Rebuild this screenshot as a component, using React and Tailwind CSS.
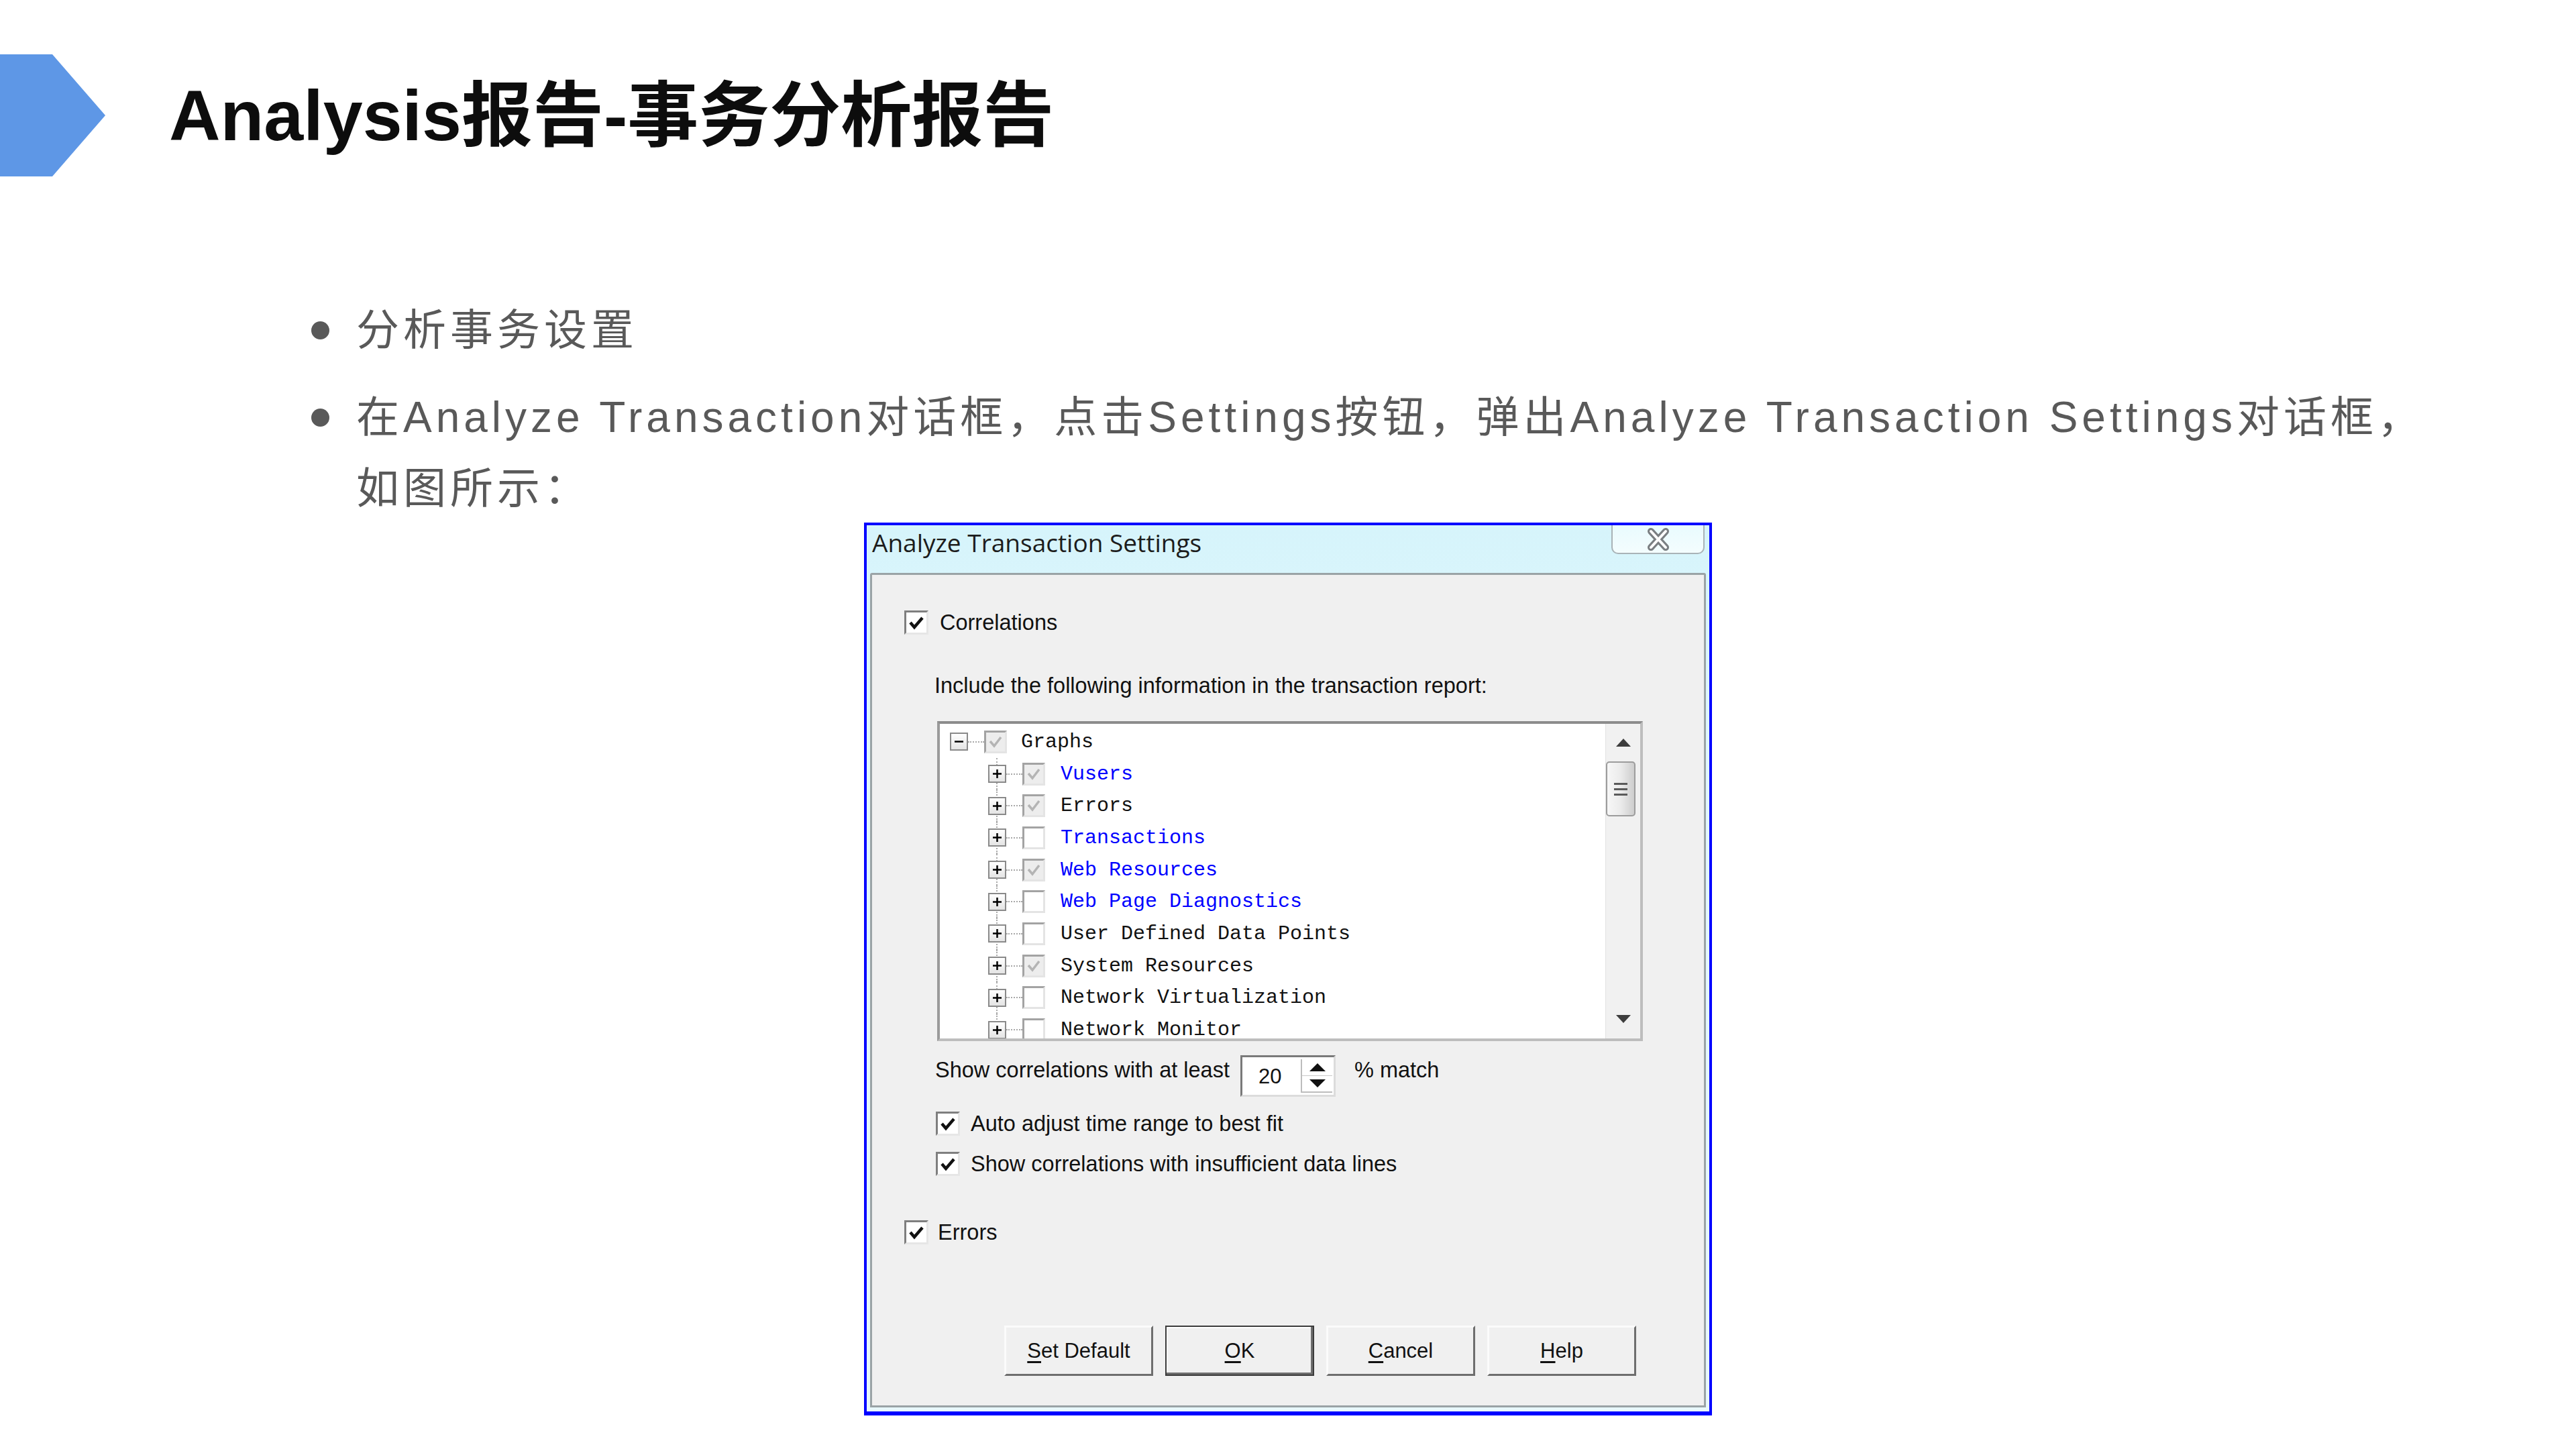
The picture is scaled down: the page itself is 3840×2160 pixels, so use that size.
import React from "react";

const treeRows = [
  { label: "Vusers", blue: true, checked: true },
  { label: "Errors", blue: false, checked: true },
  { label: "Transactions", blue: true, checked: false },
  { label: "Web Resources", blue: true, checked: true },
  { label: "Web Page Diagnostics", blue: true, checked: false },
  { label: "User Defined Data Points", blue: false, checked: false },
  { label: "System Resources", blue: false, checked: true },
  { label: "Network Virtualization", blue: false, checked: false },
  { label: "Network Monitor", blue: false, checked: false },
];

function CheckBox({ checked = true }) {
  return (
    <span className="w-[36px] h-[36px] shrink-0 bg-white border-[3px] border-t-[#7f7f7f] border-l-[#7f7f7f] border-b-[#e6e6e6] border-r-[#e6e6e6] flex items-center justify-center">
      {checked && (
        <svg width="24" height="22" viewBox="0 0 24 22">
          <path d="M3 11 L9 18 L21 4" fill="none" stroke="#111" strokeWidth="4.5" />
        </svg>
      )}
    </span>
  );
}

function TreeCheck({ checked }) {
  return (
    <span
      className={
        "w-[34px] h-[34px] shrink-0 border-[3px] border-t-[#a3a3a3] border-l-[#a3a3a3] border-b-[#e4e4e4] border-r-[#e4e4e4] flex items-center justify-center " +
        (checked ? "bg-[#ededed]" : "bg-white")
      }
    >
      {checked && (
        <svg width="22" height="20" viewBox="0 0 22 20">
          <path d="M3 9 L9 16 L19 3" fill="none" stroke="#b4b4b4" strokeWidth="3.5" />
        </svg>
      )}
    </span>
  );
}

function ExpandBox({ minus }) {
  return (
    <span className="relative z-10 w-[27px] h-[27px] shrink-0 border-2 border-[#8a8a8a] bg-[linear-gradient(180deg,#ffffff,#e4e4e4)] flex items-center justify-center">
      <svg width="15" height="15" viewBox="0 0 15 15">
        <path d={minus ? "M1 7.5 H14" : "M1 7.5 H14 M7.5 1 V14"} stroke="#000" strokeWidth="2.5" />
      </svg>
    </span>
  );
}

function Btn({ first, rest, isDefault }) {
  return (
    <div
      className={
        "w-[222px] h-[75px] flex items-center justify-center bg-[#f0f0f0] text-[31px] text-[#111] " +
        (isDefault
          ? "border-2 border-[#3c3c3c] shadow-[inset_-3px_-3px_0_#6e6e6e,inset_2px_2px_0_#ffffff]"
          : "border-[3px] border-t-[#fbfbfb] border-l-[#fbfbfb] border-b-[#6e6e6e] border-r-[#6e6e6e]")
      }
    >
      <span>
        <span className="underline underline-offset-[5px]">{first}</span>
        {rest}
      </span>
    </div>
  );
}

function Tree() {
  return (
    <div className="mt-[34px] ml-[49px] w-[1052px] h-[477px] shrink-0 bg-white border-[4px] border-t-[#8c8c8c] border-l-[#9a9a9a] border-b-[#bdbdbd] border-r-[#bdbdbd] flex overflow-hidden">
      <div className="flex-1 pt-[3px] overflow-hidden font-['Liberation_Mono',monospace] text-[30px] leading-none">
        <div className="h-[47.7px] flex items-center pl-[15px]">
          <ExpandBox minus />
          <span className="w-[24px] border-t-2 border-dotted border-[#a8a8a8]" />
          <TreeCheck checked />
          <span className="ml-[21px] text-[#111]">Graphs</span>
        </div>
        {treeRows.map((r) => (
          <div key={r.label} className="h-[47.7px] flex items-center pl-[71px]">
            <span className="relative w-[28px] h-full flex items-center justify-center">
              <span className="absolute inset-y-0 left-[13px] border-l-2 border-dotted border-[#a8a8a8]" />
              <ExpandBox />
            </span>
            <span className="w-[24px] border-t-2 border-dotted border-[#a8a8a8]" />
            <TreeCheck checked={r.checked} />
            <span className={"ml-[23px] whitespace-nowrap " + (r.blue ? "text-[#0000ff]" : "text-[#111]")}>
              {r.label}
            </span>
          </div>
        ))}
      </div>
      <div className="w-[52px] h-full shrink-0 bg-[#f1f1f1] border-l border-[#e2e2e2] flex flex-col">
        <div className="h-[56px] flex items-center justify-center">
          <svg width="22" height="12" viewBox="0 0 22 12">
            <path d="M11 0 L22 12 H0 Z" fill="#3d3d3d" />
          </svg>
        </div>
        <div className="w-[44px] h-[82px] rounded-[5px] border-2 border-[#9c9c9c] bg-[linear-gradient(90deg,#f7f7f7,#ebebeb_50%,#cdcdcd)] flex flex-col items-center justify-center gap-[5px]">
          <span className="w-[20px] h-[3px] bg-[#5a5a5a]" />
          <span className="w-[20px] h-[3px] bg-[#5a5a5a]" />
          <span className="w-[20px] h-[3px] bg-[#5a5a5a]" />
        </div>
        <div className="mt-auto h-[58px] flex items-center justify-center">
          <svg width="22" height="12" viewBox="0 0 22 12">
            <path d="M0 0 H22 L11 12 Z" fill="#3d3d3d" />
          </svg>
        </div>
      </div>
    </div>
  );
}

function Dialog() {
  return (
    <div className="mx-auto mt-[-2px] w-[1264px] h-[1331px] border-[4px] border-b-[6px] border-[#0000ff] bg-[linear-gradient(180deg,#d6f4fb_0%,#e2f8fd_30%,#e8f8fb_100%)] flex flex-col">
      <div className="h-[71px] shrink-0 flex items-start justify-between pl-[8px] pr-[7px]">
        <span className="mt-[7px] font-['Open_Sans',sans-serif] text-[37px] leading-none text-[#1c1c1c]">
          Analyze Transaction Settings
        </span>
        <div className="w-[139px] h-[43px] border-2 border-t-0 border-[#a9b3b7] rounded-b-[10px] bg-[linear-gradient(180deg,#e9fbfe,#f4fdfe)] flex items-center justify-center">
          <svg width="40" height="34" viewBox="0 0 40 34">
            <path d="M9 5 L31 29 M31 5 L9 29" stroke="#7a7f82" strokeWidth="10" strokeLinecap="round" />
            <path d="M9 5 L31 29 M31 5 L9 29" stroke="#ffffff" strokeWidth="4" strokeLinecap="round" />
          </svg>
        </div>
      </div>
      <div className="flex-1 mx-[5px] mb-[6px] border-[3px] border-[#9aa3a6] rounded-t-[3px] bg-[#f0f0f0] pl-[48px] flex flex-col font-['Liberation_Sans',sans-serif] text-[32.5px] leading-none text-[#111]">
        <div className="mt-[52px] h-[38px] flex items-center gap-[17px]">
          <CheckBox />
          <span>Correlations</span>
        </div>
        <div className="mt-[56px] h-[38px] ml-[45px] flex items-center">
          Include the following information in the transaction report:
        </div>
        <Tree />
        <div className="mt-[21px] ml-[46px] h-[62px] flex items-center">
          <span className="w-[455px] shrink-0 mb-[18px] whitespace-nowrap">Show correlations with at least</span>
          <div className="w-[142px] h-[62px] shrink-0 bg-white border-[3px] border-t-[#7a7a7a] border-l-[#7a7a7a] border-b-[#dcdcdc] border-r-[#dcdcdc] flex items-center">
            <span className="ml-[24px] text-[31px]">20</span>
            <div className="ml-auto mr-[2px] w-[47px] h-[50px] border-l-2 border-b-2 border-[#bdbdbd] flex flex-col">
              <div className="flex-1 flex items-center justify-center border-b border-[#c8c8c8]">
                <svg width="24" height="12" viewBox="0 0 24 12">
                  <path d="M12 0 L24 12 H0 Z" fill="#111" />
                </svg>
              </div>
              <div className="flex-1 flex items-center justify-center">
                <svg width="24" height="12" viewBox="0 0 24 12">
                  <path d="M0 0 H24 L12 12 Z" fill="#111" />
                </svg>
              </div>
            </div>
          </div>
          <span className="ml-[28px] mb-[18px] whitespace-nowrap">% match</span>
        </div>
        <div className="mt-[22px] ml-[47px] h-[36px] flex items-center gap-[16px]">
          <CheckBox />
          <span>Auto adjust time range to best fit</span>
        </div>
        <div className="mt-[24px] ml-[47px] h-[36px] flex items-center gap-[16px]">
          <CheckBox />
          <span>Show correlations with insufficient data lines</span>
        </div>
        <div className="mt-[65px] h-[38px] flex items-center gap-[14px]">
          <CheckBox />
          <span>Errors</span>
        </div>
        <div className="mt-[120px] ml-[149px] flex gap-[18px]">
          <Btn first="S" rest="et Default" />
          <Btn first="O" rest="K" isDefault />
          <Btn first="C" rest="ancel" />
          <Btn first="H" rest="elp" />
        </div>
      </div>
    </div>
  );
}

export default function App() {
  return (
    <div className="w-[3840px] h-[2160px] bg-white overflow-hidden font-['Liberation_Sans','Noto_Sans_CJK_SC',sans-serif]">
      <div className="pt-[81px] flex items-center">
        <svg width="157" height="182" viewBox="0 0 157 182" className="shrink-0">
          <polygon points="0,0 78,0 157,91 78,182 0,182" fill="#5e97e6" />
        </svg>
        <h1 className="ml-[95px] text-[106px] font-bold leading-none text-[#0d0d0d] whitespace-nowrap">
          Analysis报告-事务分析报告
        </h1>
      </div>

      <div className="mt-[176px] pl-[464px] text-[64px] leading-[106px] tracking-[6px] text-[#595959]">
        <div className="flex items-start">
          <span className="mt-[40px] w-[27px] h-[27px] rounded-full bg-[#595959] shrink-0" />
          <span className="ml-[40px]">分析事务设置</span>
        </div>
        <div className="mt-[24px] flex items-start">
          <span className="mt-[40px] w-[27px] h-[27px] rounded-full bg-[#595959] shrink-0" />
          <span className="ml-[40px] whitespace-nowrap">
            在Analyze Transaction对话框，点击Settings按钮，弹出Analyze Transaction Settings对话框，
            <br />
            如图所示：
          </span>
        </div>
      </div>

      <Dialog />
    </div>
  );
}
